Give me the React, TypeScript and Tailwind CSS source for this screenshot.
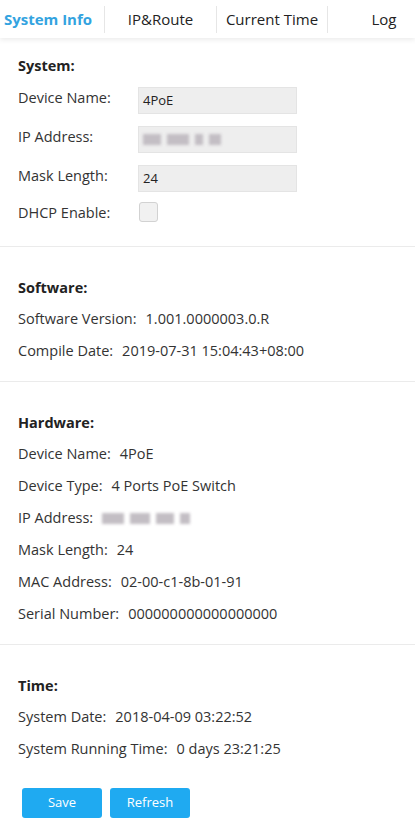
import React from 'react';

const FONT = { fontFamily: '"Open Sans", "Noto Sans", "Noto Sans CJK SC", sans-serif' };

const Blurred: React.FC<{ widths: number[] }> = ({ widths }) => (
  <div className="flex items-center gap-[6px] blur-[1.5px]">
    {widths.map((w, i) => (
      <div key={i} className="h-[11px] bg-[#c3bec4]" style={{ width: w }} />
    ))}
  </div>
);

const InfoRow: React.FC<{ label: string; children: React.ReactNode }> = ({ label, children }) => (
  <div className="h-[32px] flex items-center gap-[9px]">
    <span>{label}</span>
    {children}
  </div>
);

const Heading: React.FC<{ title: string }> = ({ title }) => (
  <div className="h-[30px] flex items-center font-bold text-[#222]">{title}</div>
);

export default function App() {
  const tabs = [
    { name: 'System Info', w: 'w-[105px] pr-[8px]', active: true },
    { name: 'IP&Route', w: 'w-[112px]', active: false },
    { name: 'Current Time', w: 'w-[111px]', active: false },
    { name: 'Log', w: 'w-[112px] shrink-0', active: false },
  ];

  return (
    <div className="w-[415px] min-h-[827px] bg-white text-[14.5px] text-[#333]" style={FONT}>
      {/* Tabs */}
      <div className="h-[38px] flex items-center overflow-hidden bg-white shadow-[0_2px_5px_rgba(0,0,0,0.08)] relative">
        {tabs.map((t, i) => (
          <div
            key={t.name}
            className={`${t.w} shrink-0 h-[27px] flex items-center justify-center text-[15px] ${
              i < tabs.length - 1 ? 'border-r border-[#e6e6e6]' : ''
            } ${t.active ? 'font-bold text-[#33a3e0]' : 'text-[#222]'}`}
          >
            {t.name}
          </div>
        ))}
      </div>

      {/* System */}
      <div className="pl-[18px] pt-[13px] pb-[9px] border-b border-[#ebebeb]">
        <Heading title="System:" />
        {[
          { label: 'Device Name:', value: '4PoE' },
          { label: 'IP Address:', value: null },
          { label: 'Mask Length:', value: '24' },
        ].map(r => (
          <div key={r.label} className="h-[39px] flex items-center">
            <span className="w-[120px] -mt-[6px]">{r.label}</span>
            <div className="w-[159px] h-[27px] bg-[#eeeeee] border border-[#e4e4e4] flex items-center pl-[4px] text-[13px] text-[#222]">
              {r.value ?? <Blurred widths={[18, 22, 8, 12]} />}
            </div>
          </div>
        ))}
        <div className="h-[39px] flex items-start">
          <span className="w-[121px] mt-[4px]">DHCP Enable:</span>
          <div className="mt-[4px] w-[19px] h-[20px] rounded-[3px] bg-[#f1f1f1] border border-[#d2d2d2]" />
        </div>
      </div>

      {/* Software */}
      <div className="pl-[18px] pt-[26px] pb-[14px] border-b border-[#ebebeb]">
        <Heading title="Software:" />
        <InfoRow label="Software Version:">
          <span>1.001.0000003.0.R</span>
        </InfoRow>
        <InfoRow label="Compile Date:">
          <span>2019-07-31 15:04:43+08:00</span>
        </InfoRow>
      </div>

      {/* Hardware */}
      <div className="pl-[18px] pt-[26px] pb-[14px] border-b border-[#ebebeb]">
        <Heading title="Hardware:" />
        <InfoRow label="Device Name:">
          <span>4PoE</span>
        </InfoRow>
        <InfoRow label="Device Type:">
          <span>4 Ports PoE Switch</span>
        </InfoRow>
        <InfoRow label="IP Address:">
          <Blurred widths={[22, 20, 18, 10]} />
        </InfoRow>
        <InfoRow label="Mask Length:">
          <span>24</span>
        </InfoRow>
        <InfoRow label="MAC Address:">
          <span>02-00-c1-8b-01-91</span>
        </InfoRow>
        <InfoRow label="Serial Number:">
          <span>000000000000000000</span>
        </InfoRow>
      </div>

      {/* Time */}
      <div className="pl-[18px] pt-[26px]">
        <Heading title="Time:" />
        <InfoRow label="System Date:">
          <span>2018-04-09 03:22:52</span>
        </InfoRow>
        <InfoRow label="System Running Time:">
          <span>0 days 23:21:25</span>
        </InfoRow>
      </div>

      <div className="flex gap-[8px] pl-[22px] pt-[23px] pb-[9px]">
        <button className="w-[80px] h-[30px] rounded-[3px] bg-[#1faaf1] text-white text-[13px]">Save</button>
        <button className="w-[80px] h-[30px] rounded-[3px] bg-[#1faaf1] text-white text-[13px]">Refresh</button>
      </div>
    </div>
  );
}
